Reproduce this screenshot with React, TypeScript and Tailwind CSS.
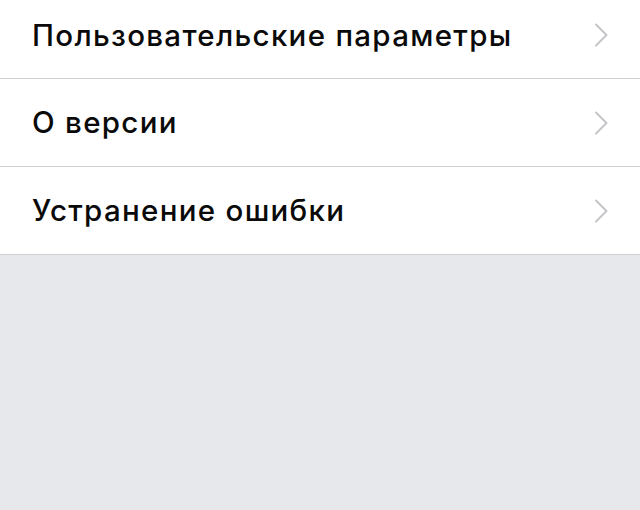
import React from 'react';

const items = ['Пользовательские параметры', 'О версии', 'Устранение ошибки'];

const Chevron = () => (
  <svg width="14" height="24" viewBox="0 0 14 24" fill="none" className="shrink-0">
    <path d="M2 1.5 L12.5 12 L2 22.5" stroke="#c5c5c8" strokeWidth="2" strokeLinecap="round" strokeLinejoin="round" />
  </svg>
);

export default function App() {
  return (
    <div className="w-[640px] h-[510px] bg-[#e6e8eb] overflow-hidden" style={{ fontFamily: 'Inter, "Liberation Sans", Arial, sans-serif' }}>
      <div className="bg-white">
        {items.map((label, i) => (
          <div
            key={label}
            className={`flex items-center justify-between pl-8 pr-[32px] border-b border-[#cfcfd2] ${i === 0 ? 'h-[79px] pb-[8px]' : 'h-[88px]'}`}
          >
            <span className="text-[29.5px] font-[550] tracking-[1.3px] text-[#0a0a0a]">{label}</span>
            <Chevron />
          </div>
        ))}
      </div>
    </div>
  );
}
